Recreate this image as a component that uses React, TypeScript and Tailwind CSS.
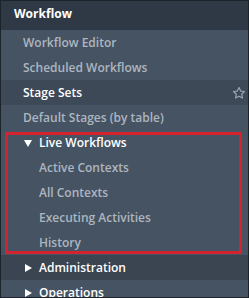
const font = { fontFamily: '"Open Sans", "Noto Sans", sans-serif' };

const Tri = ({ down }: { down?: boolean }) => (
  <svg width="8" height="8" viewBox="0 0 8 8" className="shrink-0">
    {down ? <path d="M0 1h8L4 8z" fill="#fff" /> : <path d="M1 0v8l7-4z" fill="#fff" />}
  </svg>
);

const Star = () => (
  <svg width="14" height="14" viewBox="0 0 24 24" fill="none" stroke="#9aa6b2" strokeWidth="2" strokeLinejoin="round">
    <path d="M12 2.5l2.9 6.2 6.6.8-4.9 4.6 1.3 6.6L12 17.4l-5.9 3.3 1.3-6.6-4.9-4.6 6.6-.8z" />
  </svg>
);

const Row = ({ children, className = "" }: { children: React.ReactNode; className?: string }) => (
  <div className={`h-[25px] flex items-center text-[12px] font-semibold ${className}`}>{children}</div>
);

export default function App() {
  return (
    <div className="w-[249px] h-[298px] overflow-hidden bg-[#465362] border border-[#1c232b]" style={font}>
      <div className="h-[29px] flex items-center pl-[13px] pb-[3px] bg-[#2f3945] text-white text-[12px] font-bold">
        Workflow
      </div>
      <Row className="pl-[22px] text-[#adb6c0]">Workflow Editor</Row>
      <Row className="pl-[22px] text-[#adb6c0]">Scheduled Workflows</Row>
      <Row className="pl-[22px] pr-[2px] text-white font-bold bg-[#3d4957] justify-between">
        <span>Stage Sets</span>
        <Star />
      </Row>
      <Row className="pl-[22px] text-[#adb6c0]">Default Stages (by table)</Row>
      <div className="relative">
        <Row className="pl-[23px] gap-[7px] text-white font-bold">
          <Tri down />
          <span>Live Workflows</span>
        </Row>
        <Row className="pl-[38px] text-[#adb6c0]">Active Contexts</Row>
        <Row className="pl-[38px] text-[#adb6c0]">All Contexts</Row>
        <Row className="pl-[38px] text-[#adb6c0]">Executing Activities</Row>
        <Row className="pl-[38px] text-[#adb6c0]">History</Row>
        <span className="absolute left-[4px] right-[6px] top-[2px] bottom-[1px] border-[3px] border-[#d2232e]" />
      </div>
      <Row className="pl-[23px] gap-[7px] text-white font-bold bg-[#3a4551]">
        <Tri />
        <span>Administration</span>
      </Row>
      <Row className="pl-[23px] gap-[7px] text-white font-bold">
        <Tri />
        <span>Operations</span>
      </Row>
    </div>
  );
}
